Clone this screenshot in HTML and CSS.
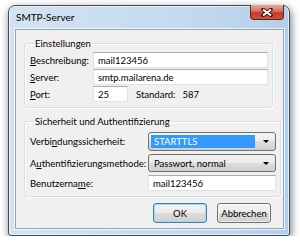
FILE: index.html
```html
<!DOCTYPE html>
<html lang="de">
<head>
    <meta charset="UTF-8">
    <title>SMTP-Server</title>
    <link rel="stylesheet" href="styles.css">
</head>
<body>
    <div class="window">
        <div class="titlebar">
            <span class="title">SMTP-Server</span>
            <span class="close">
                <svg width="12" height="9" viewBox="0 0 12 9">
                    <path d="M2 1.5 L10 7.5 M10 1.5 L2 7.5" stroke="#3b1410" stroke-width="3.6" stroke-linecap="round"/>
                    <path d="M2 1.5 L10 7.5 M10 1.5 L2 7.5" stroke="#fff" stroke-width="2"/>
                </svg>
            </span>
        </div>

        <div class="client">
            <fieldset class="group">
                <legend>Einstellungen</legend>
                <div class="row">
                    <label class="lbl-short"><u>B</u>eschreibung:</label>
                    <input type="text" class="field" value="mail123456">
                </div>
                <div class="row">
                    <label class="lbl-short"><u>S</u>erver:</label>
                    <input type="text" class="field" value="smtp.mailarena.de">
                </div>
                <div class="row">
                    <label class="lbl-short"><u>P</u>ort:</label>
                    <input type="text" class="field port" value="25">
                    <span class="std">Standard:</span>
                    <span class="std-val">587</span>
                </div>
            </fieldset>

            <fieldset class="group group-security">
                <legend>Sicherheit und Authentifizierung</legend>
                <div class="row row-combo">
                    <label class="lbl-long">Verbi<u>n</u>dungssicherheit:</label>
                    <div class="combo">
                        <span class="combo-value selected">STARTTLS</span>
                        <span class="arrow"></span>
                    </div>
                </div>
                <div class="row row-combo">
                    <label class="lbl-long">A<u>u</u>thentifizierungsmethode:</label>
                    <div class="combo">
                        <span class="combo-value">Passwort, normal</span>
                        <span class="arrow"></span>
                    </div>
                </div>
                <div class="row">
                    <label class="lbl-long">Benutzerna<u>m</u>e:</label>
                    <input type="text" class="field" value="mail123456">
                </div>
            </fieldset>

            <div class="buttons">
                <button class="btn btn-default">OK</button>
                <button class="btn">Abbrechen</button>
            </div>
        </div>
    </div>
</body>
</html>
```

FILE: styles.css
```css
* {
    margin: 0;
    padding: 0;
    box-sizing: border-box;
}

body {
    background-color: #fff;
    font-family: 'Lato', 'Open Sans', sans-serif;
    font-size: 9.5px;
    color: #000;
}

.window {
    width: 282px;
    height: 231px;
    margin: 5px 0 0 8px;
    border: 1px solid #3f4b58;
    border-radius: 7px 7px 3px 3px;
    padding: 0 5px 6px 6px;
    background: linear-gradient(to right, #d4e3f2, #c4daf0 60%, #b6cfe9);
    box-shadow: 1px 3px 8px rgba(0, 0, 0, 0.55), inset 0 0 0 1px rgba(255, 255, 255, 0.6);
}

.titlebar {
    height: 23px;
    display: flex;
    justify-content: space-between;
    align-items: flex-start;
}

.title {
    padding: 5px 0 0 1px;
    font-size: 10px;
    line-height: 13px;
}

.close {
    width: 34px;
    height: 15px;
    margin-top: -1px;
    border: 1px solid #5a2620;
    border-top: none;
    border-radius: 0 0 4px 4px;
    background: linear-gradient(#e9a99a, #d66d5d 45%, #c2392b 55%, #d2523d);
    display: flex;
    justify-content: center;
    align-items: center;
}

.client {
    height: 200px;
    border: 1px solid #8ea6bf;
    background-color: #f0f0f0;
    box-shadow: 0 0 0 1px rgba(255, 255, 255, 0.7);
    padding: 7px 10px 0 8px;
}

.group {
    border: 1px solid #d5dfe5;
    border-radius: 3px;
    box-shadow: inset 1px 1px 0 #fff, 1px 1px 0 #fff;
    padding: 2px 4px 4px 5px;
}

.group legend {
    line-height: 13px;
    padding: 0 1px;
    margin-left: 4px;
}

.group-security {
    margin-top: 7px;
    padding-top: 4px;
}

.row {
    display: flex;
    align-items: center;
    margin-bottom: 1px;
}

.row-combo {
    margin-bottom: 3px;
}

.row label {
    flex: none;
    white-space: nowrap;
}

.lbl-short {
    width: 63px;
}

.lbl-long {
    width: 118px;
}

.field {
    flex: 1;
    min-width: 0;
    height: 16px;
    border: 1px solid #dde3ea;
    border-top-color: #abadb3;
    background-color: #fff;
    font-family: inherit;
    font-size: 9.5px;
    color: #000;
    padding: 0 4px;
    outline: none;
}

.field.port {
    flex: none;
    width: 35px;
}

.std {
    margin-left: 8px;
}

.std-val {
    margin-left: 7px;
}

.combo {
    flex: 1;
    min-width: 0;
    height: 19px;
    border: 1px solid #707070;
    border-radius: 3px;
    background: linear-gradient(#f2f2f2, #ebebeb 50%, #dddddd 50%, #cfcfcf);
    display: flex;
    align-items: center;
    padding: 0 6px 0 2px;
}

.row-combo + .row-combo .combo {
    height: 18px;
}

.combo-value {
    flex: 1;
    line-height: 13px;
    padding: 0 3px;
}

.combo-value.selected {
    background-color: #3399ff;
    color: #fff;
    margin-right: 8px;
}

.arrow {
    width: 0;
    height: 0;
    border-left: 3px solid transparent;
    border-right: 3px solid transparent;
    border-top: 3px solid #000;
}

.buttons {
    display: flex;
    justify-content: flex-end;
    gap: 10px;
    margin-top: 6px;
    padding-right: 2px;
}

.btn {
    width: 54px;
    height: 20px;
    border: 1px solid #707070;
    border-radius: 3px;
    background: linear-gradient(#f2f2f2, #ebebeb 50%, #dddddd 50%, #cfcfcf);
    font-family: inherit;
    font-size: 9.5px;
    color: #000;
    box-shadow: inset 0 0 0 1px rgba(255, 255, 255, 0.6);
}

.btn-default {
    border-color: #3c7fb1;
    box-shadow: inset 0 0 0 1px #a6d6f0;
}
```
